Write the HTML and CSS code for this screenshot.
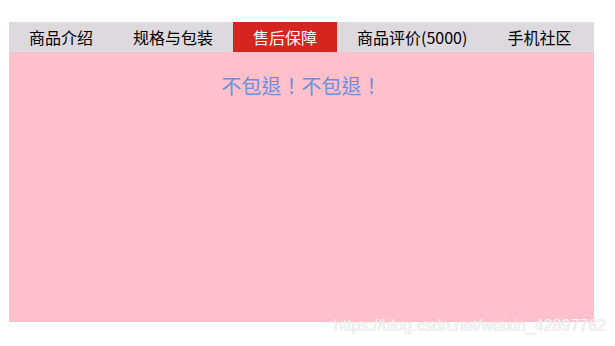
FILE: index.html
```html
<!DOCTYPE html>
<html lang="zh-CN">
<head>
<meta charset="utf-8">
<title>售后保障</title>
<link rel="stylesheet" href="styles.css">
</head>
<body>
<div class="box">
  <ul class="tabs">
    <li class="tab">商品介绍</li>
    <li class="tab">规格与包装</li>
    <li class="tab active">售后保障</li>
    <li class="tab">商品评价(5000)</li>
    <li class="tab">手机社区</li>
  </ul>
  <div class="panel">
    <p class="msg" lang="zh-TW">不包退！不包退！</p>
  </div>
</div>
<div class="watermark">https://blog.csdn.net/weixin_42897762</div>
</body>
</html>
```
FILE: styles.css
```css
html, body {
  margin: 0;
  padding: 0;
  background: #ffffff;
}
body {
  font-family: "Microsoft YaHei", "Noto Sans CJK SC", sans-serif;
  position: relative;
  width: 615px;
  height: 346px;
  overflow: hidden;
}
.box {
  width: 585px;
  margin: 22px 0 0 9px;
}
.tabs {
  list-style: none;
  margin: 0;
  padding: 0;
  display: flex;
  height: 30px;
  background: #ddd9de;
}
.tab {
  padding: 0 20px;
  height: 30px;
  line-height: 30px;
  font-size: 16px;
  color: #000;
  white-space: nowrap;
}
.tab.active {
  background: #d6251f;
  color: #fff;
}
.panel {
  height: 270px;
  background: #ffc0cb;
  overflow: hidden;
}
.msg {
  margin: 0;
  padding-top: 22px;
  text-align: center;
  font-family: "Noto Sans CJK TC", "Noto Sans CJK SC", sans-serif;
  font-size: 20px;
  line-height: 24px;
  color: #6a8fdd;
}
.watermark {
  position: absolute;
  right: 9px;
  top: 316px;
  font-family: "Liberation Sans", Arial, sans-serif;
  font-size: 16px;
  line-height: 20px;
  color: #f4f4f4;
  text-shadow: 0 0 1px #c8c8c8;
}
```
